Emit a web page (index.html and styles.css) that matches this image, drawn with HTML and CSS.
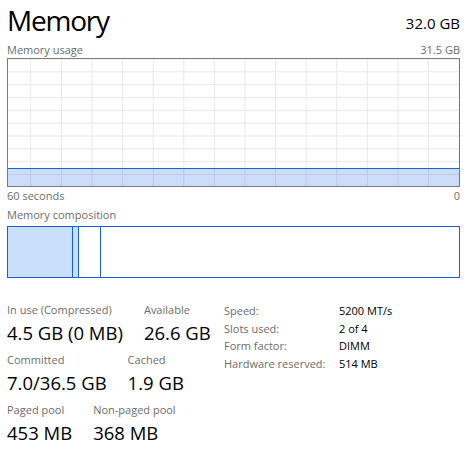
FILE: index.html
```html
<!DOCTYPE html>
<html>
<head>
<meta charset="utf-8">
<link rel="stylesheet" href="styles.css">
</head>
<body>
<div class="page">
  <div class="head">
    <h1 class="title">Memory</h1>
    <span class="total">32.0 GB</span>
  </div>
  <div class="axis axis-top"><span>Memory usage</span><span>31.5 GB</span></div>
  <div class="graph"><div class="fill"></div></div>
  <div class="axis axis-bottom"><span>60 seconds</span><span>0</span></div>
  <div class="axis axis-comp"><span>Memory composition</span></div>
  <div class="comp">
    <div class="seg seg-used"></div>
    <div class="seg seg-mod"></div>
    <div class="seg seg-standby"></div>
    <div class="seg seg-free"></div>
  </div>
  <div class="stats">
    <div class="left">
      <div class="row">
        <div class="stat"><div class="label">In use (Compressed)</div><div class="value">4.5 GB (0 MB)</div></div>
        <div class="stat"><div class="label">Available</div><div class="value">26.6 GB</div></div>
      </div>
      <div class="row">
        <div class="stat"><div class="label">Committed</div><div class="value">7.0/36.5 GB</div></div>
        <div class="stat"><div class="label">Cached</div><div class="value">1.9 GB</div></div>
      </div>
      <div class="row">
        <div class="stat"><div class="label">Paged pool</div><div class="value">453 MB</div></div>
        <div class="stat"><div class="label">Non-paged pool</div><div class="value">368 MB</div></div>
      </div>
    </div>
    <div class="right">
      <div class="prop"><span class="pk">Speed:</span><span class="pv">5200 MT/s</span></div>
      <div class="prop"><span class="pk">Slots used:</span><span class="pv">2 of 4</span></div>
      <div class="prop"><span class="pk">Form factor:</span><span class="pv">DIMM</span></div>
      <div class="prop"><span class="pk">Hardware reserved:</span><span class="pv">514 MB</span></div>
    </div>
  </div>
</div>
</body>
</html>
```
FILE: styles.css
```css
html, body {
  margin: 0;
  padding: 0;
  background: #ffffff;
}
body {
  font-family: "Open Sans", "Noto Sans", sans-serif;
  color: #000;
}
.page {
  width: 453px;
  padding: 2px 0 0 7px;
}
.head {
  display: flex;
  justify-content: space-between;
  align-items: flex-start;
  height: 40px;
}
.title {
  margin: 0;
  font-size: 28px;
  font-weight: 400;
  letter-spacing: -1.2px;
  line-height: 36px;
}
.total {
  margin-top: 11px;
  font-size: 15px;
  line-height: 20px;
}
.axis {
  display: flex;
  justify-content: space-between;
  font-size: 11px;
  line-height: 15px;
  color: #6d6d6d;
}
.axis-top {
  height: 16px;
}
.graph {
  height: 127px;
  border: 1px solid #7a7a7a;
  display: flex;
  flex-direction: column;
  justify-content: flex-end;
  background-color: #fff;
  background-image:
    linear-gradient(to right, #e8e8e8 1px, transparent 1px),
    linear-gradient(to bottom, #e8e8e8 1px, transparent 1px);
  background-size: 30.6px 100%, 100% 12.85px;
  background-position: 22.3px 0, 0 12.3px;
}
.fill {
  height: 17px;
  border-top: 1px solid #1463d8;
  background: rgba(20, 100, 230, 0.22);
}
.axis-bottom {
  margin-top: 1px;
  height: 19px;
}
.axis-comp {
  height: 19px;
}
.comp {
  display: flex;
  height: 50px;
  border: 1px solid #1560e0;
}
.seg {
  border-right: 1px solid #1560e0;
}
.seg-used {
  width: 64px;
  background: #cadffb;
}
.seg-mod {
  width: 5px;
  background: #cadffb;
}
.seg-standby {
  width: 21px;
}
.seg-free {
  flex: 1;
  border-right: 0;
}
.stats {
  display: flex;
  margin-top: 24px;
}
.left {
  width: 217px;
}
.row {
  display: flex;
  gap: 21px;
  margin-bottom: 7px;
}
.label {
  font-size: 11px;
  line-height: 16px;
  color: #6d6d6d;
}
.value {
  margin-top: 3px;
  font-size: 18.5px;
  line-height: 24px;
}
.prop {
  display: flex;
  font-size: 11px;
  line-height: 17.7px;
}
.pk {
  width: 115px;
  color: #6d6d6d;
}
.pv {
  color: #000;
}
```
